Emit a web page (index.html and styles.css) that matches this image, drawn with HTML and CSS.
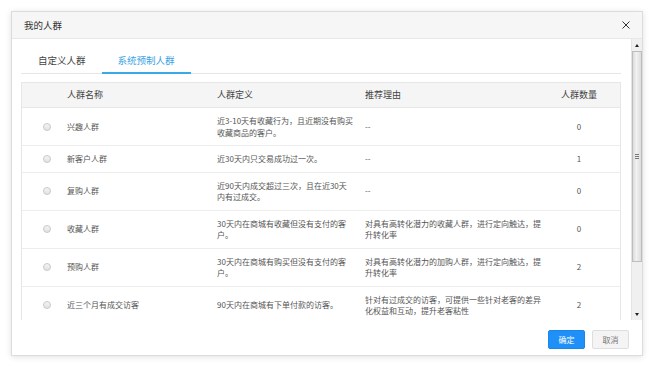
FILE: index.html
```html
<!DOCTYPE html>
<html lang="zh-CN">
<head>
    <meta charset="UTF-8">
    <meta name="viewport" content="width=device-width, initial-scale=1.0">
    <title>我的人群</title>
    <link rel="stylesheet" href="styles.css">
</head>
<body>
    <div class="dialog">
        <div class="dialog-header">
            <span class="dialog-title">我的人群</span>
            <button class="close-button">
                <svg width="8" height="8" viewBox="0 0 8 8">
                    <path d="M0.5 0.5 L7.5 7.5 M7.5 0.5 L0.5 7.5" stroke="#333" stroke-width="1" fill="none"/>
                </svg>
            </button>
        </div>

        <div class="dialog-body">
            <div class="body-content">
                <div class="tabs">
                    <div class="tab">自定义人群</div>
                    <div class="tab tab-active">系统预制人群</div>
                </div>

                <div class="group-table">
                    <div class="table-row table-head">
                        <div></div>
                        <div>人群名称</div>
                        <div>人群定义</div>
                        <div>推荐理由</div>
                        <div class="col-count">人群数量</div>
                    </div>
                    <div class="table-row">
                        <div class="col-radio"><span class="radio"></span></div>
                        <div>兴趣人群</div>
                        <div>近3-10天有收藏行为，且近期没有购买收藏商品的客户。</div>
                        <div>--</div>
                        <div class="col-count">0</div>
                    </div>
                    <div class="table-row">
                        <div class="col-radio"><span class="radio"></span></div>
                        <div>新客户人群</div>
                        <div>近30天内只交易成功过一次。</div>
                        <div>--</div>
                        <div class="col-count">1</div>
                    </div>
                    <div class="table-row">
                        <div class="col-radio"><span class="radio"></span></div>
                        <div>复购人群</div>
                        <div>近90天内成交超过三次，且在近30天内有过成交。</div>
                        <div>--</div>
                        <div class="col-count">0</div>
                    </div>
                    <div class="table-row">
                        <div class="col-radio"><span class="radio"></span></div>
                        <div>收藏人群</div>
                        <div>30天内在商城有收藏但没有支付的客户。</div>
                        <div>对具有高转化潜力的收藏人群，进行定向触达，提升转化率</div>
                        <div class="col-count">0</div>
                    </div>
                    <div class="table-row">
                        <div class="col-radio"><span class="radio"></span></div>
                        <div>预购人群</div>
                        <div>30天内在商城有购买但没有支付的客户。</div>
                        <div>对具有高转化潜力的加购人群，进行定向触达，提升转化率</div>
                        <div class="col-count">2</div>
                    </div>
                    <div class="table-row">
                        <div class="col-radio"><span class="radio"></span></div>
                        <div>近三个月有成交访客</div>
                        <div>90天内在商城有下单付款的访客。</div>
                        <div>针对有过成交的访客，可提供一些针对老客的差异化权益和互动，提升老客粘性</div>
                        <div class="col-count">2</div>
                    </div>
                </div>
            </div>

            <div class="scrollbar">
                <div class="scroll-arrow"><span class="arrow-up"></span></div>
                <div class="scroll-track">
                    <div class="scroll-thumb"><span class="grip"></span></div>
                </div>
                <div class="scroll-arrow"><span class="arrow-down"></span></div>
            </div>
        </div>

        <div class="dialog-footer">
            <button class="btn btn-primary">确定</button>
            <button class="btn btn-default">取消</button>
        </div>
    </div>
</body>
</html>
```

FILE: styles.css
```css
body{
    margin: 0;
    padding: 11px;
    background-color: #fff;
    font-family: "Noto Sans CJK SC", "Liberation Sans", sans-serif;
    color: #555;
}
.dialog{
    width: 632px;
    height: 345px;
    box-sizing: border-box;
    border: 1px solid #dcdcdc;
    background-color: #fff;
    box-shadow: 0 1px 6px rgba(0, 0, 0, 0.12);
    display: flex;
    flex-direction: column;
}
.dialog-header{
    height: 26px;
    border-bottom: 1px solid #e8e8e8;
    background-color: #f6f6f6;
    display: flex;
    align-items: center;
    justify-content: space-between;
    padding: 0 10px 0 12px;
}
.dialog-title{
    font-size: 9.5px;
    color: #333;
}
.close-button{
    border: none;
    background: transparent;
    padding: 0;
    width: 12px;
    height: 12px;
    display: flex;
    align-items: center;
    justify-content: center;
}
.dialog-body{
    height: 281px;
    display: flex;
    overflow: hidden;
}
.body-content{
    flex: 1;
    padding: 10px 10px 0 9px;
    overflow: hidden;
}
.tabs{
    display: flex;
    padding-left: 1px;
    border-bottom: 1px solid #e6e6e6;
}
.tab{
    height: 23px;
    line-height: 22px;
    padding: 0 16px;
    font-size: 9.5px;
    color: #444;
    border-bottom: 2px solid transparent;
    margin-bottom: -1px;
}
.tab-active{
    color: #3ba3e6;
    border-bottom-color: #3aa9e8;
}
.group-table{
    margin-top: 8px;
    border: 1px solid #e6e6e6;
    border-bottom: none;
}
.table-row{
    display: grid;
    grid-template-columns: 45px 150px 148px 180px 1fr;
    align-items: center;
    font-size: 8px;
    line-height: 11.5px;
    padding: 7px 0;
    border-bottom: 1px solid #ededed;
}
.table-row > div{
    padding-right: 11px;
}
.table-row > div:nth-child(4){
    padding-right: 0;
}
.table-head{
    height: 25px;
    box-sizing: border-box;
    padding: 0;
    background-color: #f5f5f5;
    font-size: 9px;
    color: #444;
    border-bottom: 1px solid #e8e8e8;
}
.col-radio{
    display: flex;
    justify-content: center;
}
.table-row > .col-radio{
    padding: 0 0 0 4px;
}
.col-count{
    text-align: center;
}
.table-row > .col-count{
    padding-right: 7px;
}
.radio{
    width: 6px;
    height: 6px;
    border-radius: 50%;
    border: 1px solid #c9c9c9;
    background: linear-gradient(#f4f4f4, #e2e2e2);
}
.scrollbar{
    width: 10px;
    display: flex;
    flex-direction: column;
    background-color: #f0f0f0;
    border-left: 1px solid #e4e4e4;
}
.scroll-arrow{
    height: 12px;
    display: flex;
    align-items: center;
    justify-content: center;
}
.arrow-up{
    border-left: 2.5px solid transparent;
    border-right: 2.5px solid transparent;
    border-bottom: 3px solid #222;
}
.arrow-down{
    border-left: 2.5px solid transparent;
    border-right: 2.5px solid transparent;
    border-top: 3px solid #222;
}
.scroll-track{
    flex: 1;
}
.scroll-thumb{
    height: 211px;
    box-sizing: border-box;
    border: 1px solid #bdbdbd;
    background: linear-gradient(to right, #dadada, #f2f2f2 40%, #dcdcdc);
    display: flex;
    align-items: center;
    justify-content: center;
}
.grip{
    width: 4px;
    height: 5px;
    background: repeating-linear-gradient(#777 0 1px, transparent 1px 2px);
}
.dialog-footer{
    flex: 1;
    display: flex;
    justify-content: flex-end;
    align-items: flex-start;
    gap: 7px;
    padding: 10px 13px 0 0;
}
.btn{
    width: 37px;
    height: 19px;
    font-family: "Noto Sans CJK SC", "Liberation Sans", sans-serif;
    font-size: 8px;
    padding: 0;
    border-radius: 2px;
}
.btn-primary{
    background-color: #1e90f7;
    border: 1px solid #1a86e8;
    color: #fff;
}
.btn-default{
    background-color: #f4f4f4;
    border: 1px solid #dedede;
    color: #777;
}
```
